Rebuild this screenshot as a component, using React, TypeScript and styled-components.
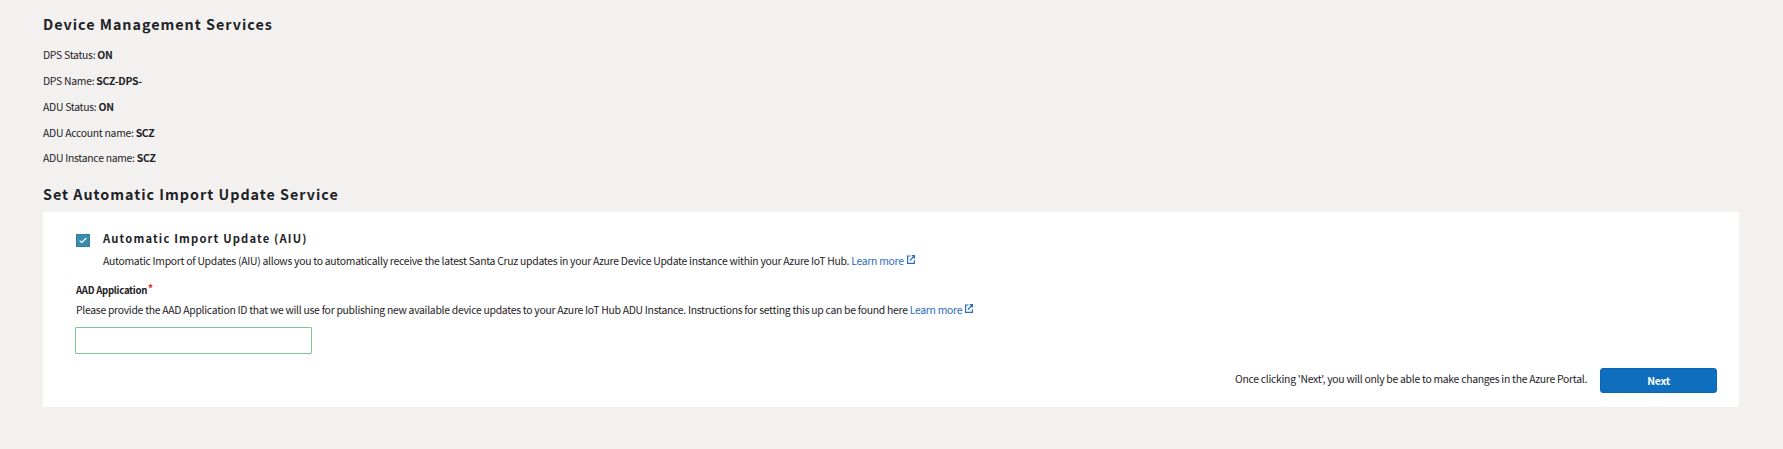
import React from "react";
import styled, { createGlobalStyle } from "styled-components";

const GlobalStyle = createGlobalStyle`
  * { box-sizing: border-box; }
  body {
    margin: 0;
    background: #f3f1f0;
    color: #1d2226;
    font-family: "Noto Sans CJK SC", "Noto Sans", sans-serif;
    font-size: 10.4px;
    letter-spacing: -0.28px;
  }
  h2, h3, p { margin: 0; }
`;

const Page = styled.main`
  padding: 12px 44px 0 43px;
  min-height: 449px;
`;

const SectionTitle = styled.h2`
  font-size: 14.3px;
  font-weight: 700;
  line-height: 24px;
  letter-spacing: 1px;
  white-space: nowrap;
`;

const StatusList = styled.div`
  display: flex;
  flex-direction: column;
  padding: 6.25px 0 11px;
`;

const StatusRow = styled.p`
  height: 25.75px;
  line-height: 25.75px;
  white-space: nowrap;
`;

const Card = styled.section`
  margin-top: 6px;
  width: 1696px;
  height: 195px;
  background: #fff;
  padding: 16px 22px 0 32px;
`;

const OptionRow = styled.div`
  display: flex;
  align-items: flex-start;
`;

const Checkbox = styled.span`
  display: flex;
  align-items: center;
  justify-content: center;
  width: 14px;
  height: 13px;
  margin: 6px 13px 0 1px;
  background: #3b8ab0;
  border: 1px solid #347d9f;
`;

const OptionTitle = styled.h3`
  margin-bottom: 2px;
  font-size: 11.2px;
  line-height: 20px;
  letter-spacing: 1.17px;
  white-space: nowrap;
`;

const Text = styled.p<{ $height?: number }>`
  line-height: ${(p) => p.$height ?? 22}px;
  white-space: nowrap;
`;

const Link = styled.a`
  color: #2a6cbd;
  svg { margin-left: 3px; vertical-align: 1px; }
`;

const FieldLabel = styled.label`
  display: block;
  margin: 9px 0 0 1px;
  font-size: 9.6px;
  letter-spacing: -0.28px;
  font-weight: 700;
  line-height: 18px;
`;

const Required = styled.span`
  color: #e0222c;
  margin-left: 1px;
  font-size: 10px;
  line-height: 1;
  position: relative;
  top: -2px;
`;

const FieldHelp = styled.div`
  margin-left: 1px;
`;

const Input = styled.input`
  display: block;
  width: 237px;
  height: 27px;
  margin-top: 7px;
  border: 1px solid #7cc796;
  border-radius: 1px;
  background: #fff;
  outline: none;
`;

const Footer = styled.div`
  display: flex;
  justify-content: flex-end;
  align-items: flex-start;
  gap: 13px;
  margin-top: 14px;
`;

const Button = styled.button`
  width: 117px;
  height: 25px;
  padding: 0 0 1px;
  border: 1px solid #0b66b8;
  border-radius: 3px;
  background: #106ebe;
  color: #fff;
  font: 700 10.5px/21px "Noto Sans CJK SC", sans-serif;
  letter-spacing: -0.3px;
`;

const ExternalIcon = () => (
  <svg width="8" height="9" viewBox="0 0 8 9" fill="none" stroke="#2a6cbd" strokeWidth="1.2">
    <path d="M3.5 1H.6v7.3h6.8V5.2M4.7.7h2.7v2.8M7.3.9 3 5.5" />
  </svg>
);

const LearnMore = () => (
  <Link>
    Learn more
    <ExternalIcon />
  </Link>
);

const statuses = [
  ["DPS Status", "ON"],
  ["DPS Name", "SCZ-DPS-"],
  ["ADU Status", "ON"],
  ["ADU Account name", "SCZ"],
  ["ADU Instance name", "SCZ"],
];

export default function App() {
  return (
    <Page>
      <GlobalStyle />
      <SectionTitle>Device Management Services</SectionTitle>
      <StatusList>
        {statuses.map(([name, value]) => (
          <StatusRow key={name}>
            {name}: <b>{value}</b>
          </StatusRow>
        ))}
      </StatusList>
      <SectionTitle>Set Automatic Import Update Service</SectionTitle>
      <Card>
        <OptionRow>
          <Checkbox>
            <svg width="8" height="7" viewBox="0 0 8 7" fill="none" stroke="#fff" strokeWidth="1.2">
              <path d="M.7 3.6 2.8 5.5 7.3 1" />
            </svg>
          </Checkbox>
          <div>
            <OptionTitle>Automatic Import Update (AIU)</OptionTitle>
            <Text>
              Automatic Import of Updates (AIU) allows you to automatically receive the latest Santa Cruz updates in your
              Azure Device Update instance within your Azure IoT Hub. <LearnMore />
            </Text>
          </div>
        </OptionRow>
        <FieldLabel htmlFor="aad">
          AAD Application<Required>*</Required>
        </FieldLabel>
        <FieldHelp>
          <Text $height={21}>
            Please provide the AAD Application ID that we will use for publishing new available device updates to your
            Azure IoT Hub ADU Instance. Instructions for setting this up can be found here <LearnMore />
          </Text>
        </FieldHelp>
        <Input id="aad" />
        <Footer>
          <Text>Once clicking 'Next', you will only be able to make changes in the Azure Portal.</Text>
          <Button>Next</Button>
        </Footer>
      </Card>
    </Page>
  );
}
